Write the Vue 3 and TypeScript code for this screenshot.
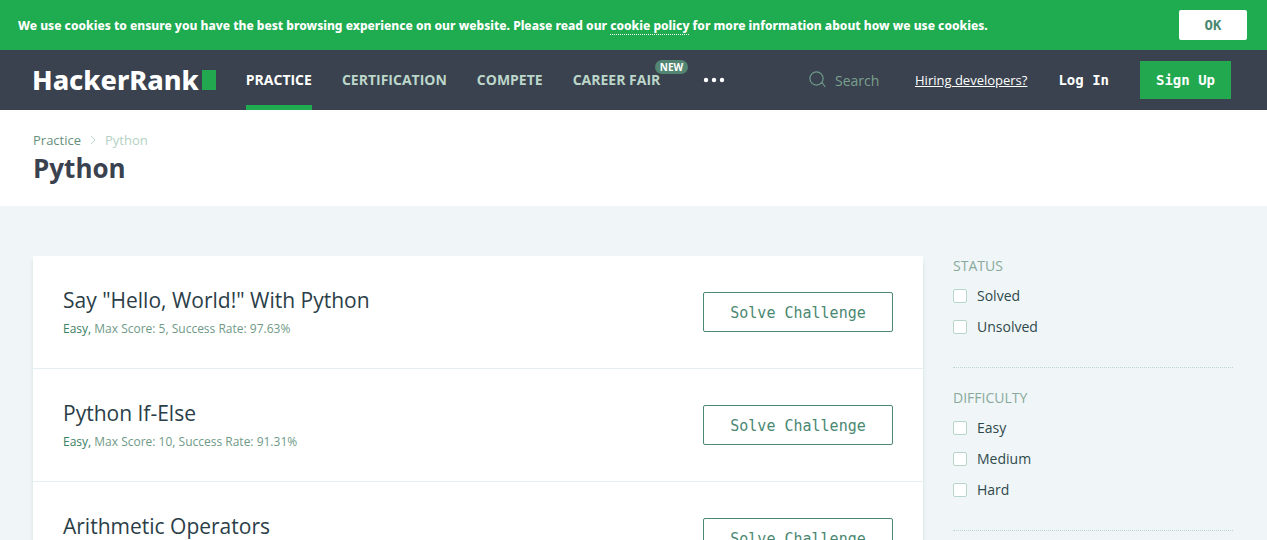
<script setup lang="ts">
import { ref } from 'vue'

interface NavItem { label: string; active?: boolean; badge?: string }
interface Challenge { title: string; score: number; rate: string }
interface FilterGroup { title: string; options: string[] }

const navItems: NavItem[] = [
  { label: 'Practice', active: true },
  { label: 'Certification' },
  { label: 'Compete' },
  { label: 'Career Fair', badge: 'New' },
]

const challenges: Challenge[] = [
  { title: 'Say "Hello, World!" With Python', score: 5, rate: '97.63%' },
  { title: 'Python If-Else', score: 10, rate: '91.31%' },
  { title: 'Arithmetic Operators', score: 10, rate: '98.51%' },
]

const filters: FilterGroup[] = [
  { title: 'Status', options: ['Solved', 'Unsolved'] },
  { title: 'Difficulty', options: ['Easy', 'Medium', 'Hard'] },
]

const selected = ref<string[]>([])
const query = ref('')
</script>

<template>
  <div class="page">
    <div class="cookie-bar">
      <p>
        We use cookies to ensure you have the best browsing experience on our website. Please read our
        <a href="#">cookie policy</a> for more information about how we use cookies.
      </p>
      <button type="button" class="ok">OK</button>
    </div>

    <header class="topbar">
      <a href="#" class="logo">HackerRank<span class="cursor"></span></a>
      <nav class="nav">
        <a v-for="item in navItems" :key="item.label" href="#" :class="{ active: item.active }">
          {{ item.label }}<span v-if="item.badge" class="badge">{{ item.badge }}</span>
        </a>
      </nav>
      <button type="button" class="more" aria-label="More">
        <svg width="22" height="6" viewBox="0 0 22 6" fill="#fff">
          <circle cx="3" cy="3" r="2.2" /><circle cx="11" cy="3" r="2.2" /><circle cx="19" cy="3" r="2.2" />
        </svg>
      </button>
      <div class="account">
        <label class="search">
          <svg width="18" height="18" viewBox="0 0 18 18" fill="none" stroke="#6f9a8b" stroke-width="1.2">
            <circle cx="7.5" cy="7.5" r="6.6" /><path d="M11.5 12.5 L13 11.5 L16.2 16" />
          </svg>
          <input v-model="query" type="text" placeholder="Search" aria-label="Search" />
        </label>
        <a href="#" class="hiring">Hiring developers?</a>
        <a href="#" class="login">Log In</a>
        <button type="button" class="signup">Sign Up</button>
      </div>
    </header>

    <section class="heading">
      <div class="crumbs">
        <a href="#">Practice</a>
        <svg width="6" height="10" viewBox="0 0 6 10" fill="none" stroke="#bcd8cb"><path d="M1 1 L5 5 L1 9" /></svg>
        <span>Python</span>
      </div>
      <h1>Python</h1>
    </section>

    <main class="content">
      <div class="list">
        <article v-for="c in challenges" :key="c.title" class="challenge">
          <div>
            <h2>{{ c.title }}</h2>
            <p><span class="level">Easy,</span> Max Score: {{ c.score }}, Success Rate: {{ c.rate }}</p>
          </div>
          <button type="button" class="solve">Solve Challenge</button>
        </article>
      </div>
      <aside class="filters">
        <section v-for="group in filters" :key="group.title" class="group">
          <h3>{{ group.title }}</h3>
          <label v-for="option in group.options" :key="option">
            <input v-model="selected" type="checkbox" :value="option" />{{ option }}
          </label>
        </section>
      </aside>
    </main>
  </div>
</template>

<style>
body {
  margin: 0;
  background: #f0f5f8;
}
</style>

<style scoped>
.page {
  height: 100vh;
  overflow: hidden;
  font-family: "Open Sans", "Noto Sans", sans-serif;
  color: #39424e;
}
a { color: inherit; text-decoration: none; }
h1, h2, h3, p { margin: 0; }
button { padding: 0; border: 0; cursor: pointer; }

.cookie-bar {
  display: flex;
  align-items: center;
  justify-content: space-between;
  height: 50px;
  padding: 0 20px 0 18px;
  background: #1fab4f;
  color: #fff;
  font-family: "Noto Sans", sans-serif;
  font-size: 12px;
  font-weight: 800;
}
.cookie-bar a { border-bottom: 1px dotted #fff; }
.ok {
  width: 68px;
  height: 30px;
  border-radius: 2px;
  background: #fff;
  color: #4a8871;
  font: bold 14px "DejaVu Sans Mono", monospace;
}

.topbar {
  display: flex;
  align-items: center;
  height: 60px;
  padding: 0 36px 0 32px;
  background: #39424e;
  color: #fff;
}
.logo {
  display: flex;
  align-items: center;
  gap: 3px;
  margin-right: 30px;
  font-family: "Noto Sans", sans-serif;
  font-size: 27px;
  font-weight: 800;
  line-height: 60px;
}
.cursor { width: 14px; height: 20px; background: #22a950; }
.nav { display: flex; gap: 30px; }
.nav a {
  position: relative;
  box-sizing: border-box;
  height: 60px;
  border-bottom: 5px solid transparent;
  color: #bcd6ca;
  font-size: 14px;
  font-weight: 700;
  line-height: 60px;
  text-transform: uppercase;
}
.nav a.active { color: #fff; border-color: #1fab4f; }
.badge {
  position: absolute;
  top: 10px;
  right: -28px;
  padding: 0 5px;
  border-radius: 7px;
  background: #538573;
  color: #fff;
  font-size: 10px;
  line-height: 14px;
}
.more { display: flex; margin-left: 43px; background: none; }
.account { display: flex; align-items: center; margin-left: auto; }
.search { display: flex; align-items: center; gap: 8px; }
.search input {
  width: 64px;
  margin-right: 16px;
  padding: 0;
  border: 0;
  outline: 0;
  background: none;
  color: #fff;
  font: 14px "Open Sans", sans-serif;
}
.search input::placeholder { color: #7ba08f; opacity: 1; }
.hiring { margin-right: 31px; font-size: 13px; text-decoration: underline; }
.login { margin-right: 31px; font: bold 14px "DejaVu Sans Mono", monospace; }
.signup {
  width: 91px;
  height: 38px;
  background: #22a950;
  color: #fff;
  font: bold 14px "DejaVu Sans Mono", monospace;
}

.heading {
  box-sizing: border-box;
  height: 96px;
  padding: 21px 33px 0;
  background: #fff;
}
.crumbs {
  display: flex;
  align-items: center;
  gap: 9px;
  color: #b3d2c3;
  font-size: 13px;
  line-height: 18px;
}
.crumbs a { color: #668f7d; }
h1 { font-size: 26px; line-height: 38px; }

.content { display: flex; gap: 30px; padding: 50px 34px 0 33px; }
.list { flex: 1; box-shadow: 0 6px 4px #cfe2dc; }
.challenge {
  display: flex;
  align-items: flex-start;
  justify-content: space-between;
  box-sizing: border-box;
  height: 113px;
  padding: 30px 30px 0;
  border-bottom: 1px solid #e6eef2;
  background: #fff;
}
h2 { color: #2b3e48; font-size: 21px; font-weight: 400; line-height: 28px; }
.challenge p { color: #6f9a87; font-size: 12px; line-height: 16px; margin-top: 7px; }
.level { color: #3b8062; }
.solve {
  width: 190px;
  height: 40px;
  margin-top: 6px;
  padding-top: 2px;
  border: 1px solid #4a8871;
  border-radius: 2px;
  background: #fff;
  color: #4a8871;
  font: 15px "DejaVu Sans Mono", monospace;
}
.filters { width: 280px; }
.group {
  margin-bottom: 20px;
  padding-bottom: 25px;
  border-bottom: 1px dotted #bcd6ca;
}
h3 {
  margin-bottom: 4px;
  color: #88aa9b;
  font-size: 14px;
  font-weight: 400;
  line-height: 20px;
  text-transform: uppercase;
}
.group label {
  display: flex;
  align-items: center;
  gap: 10px;
  height: 31px;
  color: #2f4a4b;
  font-size: 14px;
}
.group input {
  appearance: none;
  box-sizing: border-box;
  width: 14px;
  height: 14px;
  margin: 0;
  border: 1px solid #b7d5ca;
  border-radius: 2px;
  background: #fff;
}
.group input:checked { background: #1fab4f; }
</style>
